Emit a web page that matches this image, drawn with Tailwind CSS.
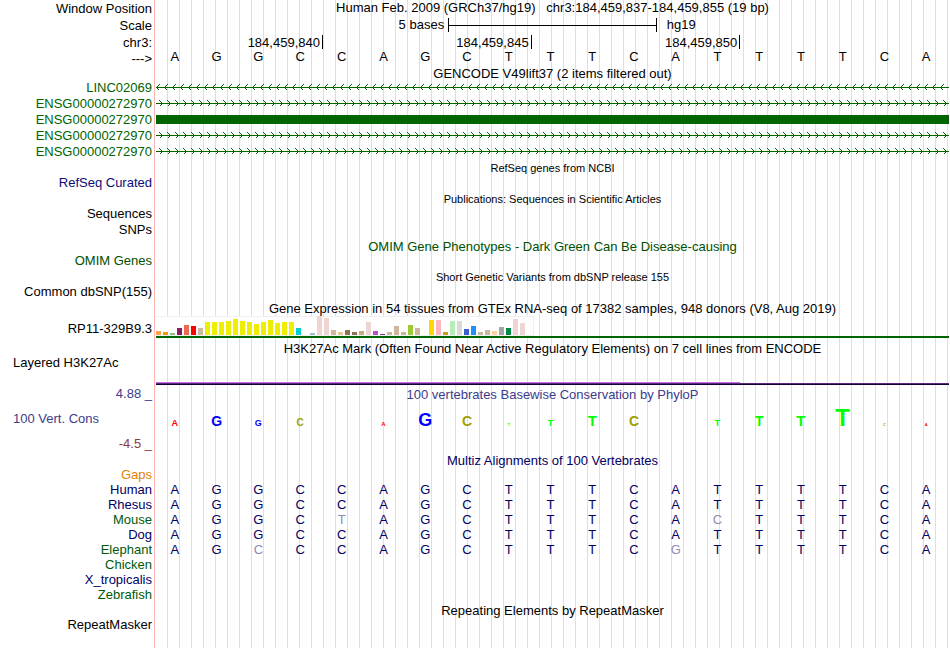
<!DOCTYPE html>
<html lang="en">
  <head>
    <meta charset="UTF-8" />
    <meta name="viewport" content="width=device-width, initial-scale=1.0" />
    <title>Human chr3:184,459,837-184,459,855</title>
    <script src="https://cdn.jsdelivr.net/npm/@tailwindcss/browser@4"></script>
  </head>
  <body class="bg-white">
    <div
      class="flex w-full overflow-hidden font-['Liberation_Sans',Arial,sans-serif] text-[13px] leading-4 text-black whitespace-nowrap"
    >
      <!-- Track labels -->
      <aside class="w-[155px] shrink-0 border-r border-[#ffb4b4] pr-0.5 pb-[15px] text-right">
        <div class="leading-[17px]">
          <p>Window Position</p>
          <p>Scale</p>
          <p>chr3:</p>
        </div>
        <p>---&gt;</p>
        <div class="mt-[13px] text-[#006400]">
          <p>LINC02069</p>
          <p>ENSG00000272970</p>
          <p>ENSG00000272970</p>
          <p>ENSG00000272970</p>
          <p>ENSG00000272970</p>
        </div>
        <p class="mt-[15px] text-[#0c0c78]">RefSeq Curated</p>
        <p class="mt-[15px]">Sequences</p>
        <p>SNPs</p>
        <p class="mt-[15px] text-[#005000]">OMIM Genes</p>
        <p class="mt-[15px]">Common dbSNP(155)</p>
        <p class="mt-[21px]">RP11-329B9.3</p>
        <p class="mt-[18px] pl-[13px] text-left">Layered H3K27Ac</p>
        <p class="mt-[15px] text-[#3c3c8c]">4.88 _</p>
        <p class="mt-[9px] pl-[13px] text-left text-[#3c3c8c]">100 Vert. Cons</p>
        <p class="mt-[9px] text-[#8c3c3c]">-4.5 _</p>
        <div class="mt-[15px] leading-[15px] text-[#005a0a]">
          <p class="text-[#e68200]">Gaps</p>
          <p class="text-[#000064]">Human</p>
          <p class="text-[#000064]">Rhesus</p>
          <p>Mouse</p>
          <p class="text-[#000064]">Dog</p>
          <p>Elephant</p>
          <p>Chicken</p>
          <p class="text-[#000064]">X_tropicalis</p>
          <p>Zebrafish</p>
        </div>
        <p class="mt-[15px]">RepeatMasker</p>
      </aside>

      <!-- Tracks, over the vertical guide lines -->
      <main
        class="mx-px min-w-0 flex-1 bg-[repeating-linear-gradient(to_right,transparent_0px,transparent_11px,#dcdcfa_11px,#dcdcfa_12px)] text-center"
      >
        <h1 class="whitespace-pre">Human Feb. 2009 (GRCh37/hg19)   chr3:184,459,837-184,459,855 (19 bp)</h1>

        <!-- Scale bar -->
        <div class="grid h-[18px] grid-cols-19 items-center">
          <span class="col-span-7 pr-1 text-right">5 bases</span>
          <span class="col-span-5 flex h-[14px] items-center border-x border-black">
            <span class="h-px w-full bg-black"></span>
          </span>
          <span class="col-span-7 pl-2.5 text-left">hg19</span>
        </div>

        <!-- Coordinates -->
        <div class="grid h-4 grid-cols-19 items-center text-right">
          <span class="col-span-4 h-[14px] border-r border-black pr-0.5">184,459,840</span>
          <span class="col-span-5 h-[14px] border-r border-black pr-0.5">184,459,845</span>
          <span class="col-span-5 h-[14px] border-r border-black pr-0.5">184,459,850</span>
        </div>
        <div class="-ml-0.5 mr-0.5 grid grid-cols-19 leading-[14px]" data-bases="AGGCCAGCTTTCATTTTCA"></div>

        <!-- GENCODE -->
        <h2 class="h-4 pt-0.5">GENCODE V49lift37 (2 items filtered out)</h2>
        <svg class="block h-20 w-full" shape-rendering="crispEdges">
          <defs>
            <pattern id="minus" width="8" height="16" patternUnits="userSpaceOnUse">
              <path d="M0 7.5H8M3.5 4.5L0.5 7.5L3.5 10.5" fill="none" stroke="#006400" />
            </pattern>
            <pattern id="plus" width="8" height="16" patternUnits="userSpaceOnUse">
              <path d="M0 7.5H8M3.5 4.5L6.5 7.5L3.5 10.5" fill="none" stroke="#006400" />
            </pattern>
          </defs>
          <rect width="100%" height="16" fill="url(#minus)" />
          <rect y="16" width="100%" height="16" fill="url(#plus)" />
          <rect y="35" width="100%" height="9" fill="#006400" />
          <rect y="48" width="100%" height="32" fill="url(#plus)" />
        </svg>

        <h2 class="text-[11px]">RefSeq genes from NCBI</h2>
        <h2 class="mt-[15px] text-[11px]">Publications: Sequences in Scientific Articles</h2>
        <h2 class="mt-8 text-[#005000]">OMIM Gene Phenotypes - Dark Green Can Be Disease-causing</h2>
        <h2 class="mt-[14px] text-[11px]">Short Genetic Variants from dbSNP release 155</h2>

        <!-- GTEx -->
        <h2 class="mt-4 h-[15px]">
          Gene Expression in 54 tissues from GTEx RNA-seq of 17382 samples, 948 donors (V8, Aug 2019)
        </h2>
        <div class="flex h-5 w-[378px] items-end gap-0.5 border-y border-r border-[#f0f0f0] bg-white" id="gtex"></div>
        <div class="h-0.5 bg-[#006400]"></div>

        <!-- H3K27Ac -->
        <h2 class="mt-[3px]">
          H3K27Ac Mark (Often Found Near Active Regulatory Elements) on 7 cell lines from ENCODE
        </h2>
        <div class="mt-[25px] h-px w-14/19 bg-[#c86ef0]"></div>
        <div class="h-px bg-[#5a2878]"></div>
        <div class="h-px bg-[#14003c]"></div>

        <!-- PhyloP -->
        <h2 class="mt-0.5 text-[#3c3c8c]">100 vertebrates Basewise Conservation by PhyloP</h2>
        <div class="-ml-0.5 mr-0.5 grid h-[50px] grid-cols-19 items-baseline-last pb-[23px]" id="phylop"></div>

        <!-- Multiz -->
        <h2 class="text-[#000064]">Multiz Alignments of 100 Vertebrates</h2>
        <div class="-ml-0.5 mr-0.5 mt-[13px] leading-[15px] text-[#000064]">
          <div class="grid grid-cols-19" data-bases="AGGCCAGCTTTCATTTTCA"></div>
          <div class="grid grid-cols-19" data-bases="AGGCCAGCTTTCATTTTCA"></div>
          <div class="grid grid-cols-19" data-bases="AGGCtAGCTTTCAcTTTCA"></div>
          <div class="grid grid-cols-19" data-bases="AGGCCAGCTTTCATTTTCA"></div>
          <div class="grid grid-cols-19" data-bases="AGcCCAGCTTTCgTTTTCA"></div>
        </div>

        <h2 class="mt-[46px]">Repeating Elements by RepeatMasker</h2>
      </main>
    </div>

    <script>
      // Lower case marks a base that differs from human
      document.querySelectorAll("[data-bases]").forEach((row) => {
        for (const base of row.dataset.bases) {
          const cell = document.createElement("span");
          cell.textContent = base.toUpperCase();
          if (base !== base.toUpperCase()) cell.className = "text-[#8c8cb4]";
          row.append(cell);
        }
      });

      // Expression per tissue: [colour, height]
      const tissues = [
        ["#ffa54f", 4], ["#ee9a00", 3], ["#8fbc8f", 2], ["#8b1c62", 7], ["#ee6a50", 10], ["#ff0000", 9],
        ["#cdb79e", 7], ["#eeee00", 13], ["#eeee00", 13], ["#eeee00", 13], ["#eeee00", 14], ["#eeee00", 16],
        ["#eeee00", 14], ["#eeee00", 13], ["#eeee00", 11], ["#eeee00", 13], ["#eeee00", 15], ["#eeee00", 12],
        ["#eeee00", 13], ["#eeee00", 13], ["#00cdcd", 7], ["#ee82ee", 0], ["#9ac0cd", 2], ["#eed5d2", 19],
        ["#eed5d2", 17], ["#cdb79e", 5], ["#eec591", 3], ["#8b7355", 5], ["#8b7355", 3], ["#cdaa7d", 4],
        ["#eed5d2", 13], ["#b452cd", 4], ["#7a378b", 1], ["#cdb79e", 3], ["#cdb79e", 9], ["#cdb79e", 3],
        ["#9acd32", 10], ["#cdb79e", 7], ["#7a67ee", 0], ["#ffd700", 15], ["#ffb6c1", 15], ["#cd9b1d", 3],
        ["#b4eeb4", 14], ["#d9d9d9", 14], ["#3a5fcd", 6], ["#1e90ff", 9], ["#cdb79e", 3], ["#cdb79e", 5],
        ["#ffd39b", 4], ["#a6a6a6", 8], ["#008b45", 7], ["#eed5d2", 16], ["#eed5d2", 12], ["#ff00ff", 0],
      ];
      const gtex = document.getElementById("gtex");
      for (const [color, height] of tissues) {
        const bar = document.createElement("div");
        bar.className = "w-[5px] shrink-0";
        bar.style.backgroundColor = color;
        bar.style.height = height + "px";
        gtex.append(bar);
      }

      // Conservation logo: [base, letter size]
      const scores = [
        ["A", 9], ["G", 14], ["G", 9], ["C", 10], ["", 8], ["A", 6], ["G", 18], ["C", 14], ["T", 4], ["T", 9],
        ["T", 15], ["C", 14], ["", 8], ["T", 9], ["T", 14], ["T", 15], ["T", 24], ["C", 4], ["A", 4],
      ];
      const baseColors = { A: "#ff0000", C: "#a0a000", G: "#0000ff", T: "#00ff00" };
      const phylop = document.getElementById("phylop");
      for (const [base, size] of scores) {
        const letter = document.createElement("span");
        letter.className = "font-bold leading-none";
        letter.textContent = base;
        letter.style.color = baseColors[base];
        letter.style.fontSize = size + "px";
        phylop.append(letter);
      }
    </script>
  </body>
</html>
